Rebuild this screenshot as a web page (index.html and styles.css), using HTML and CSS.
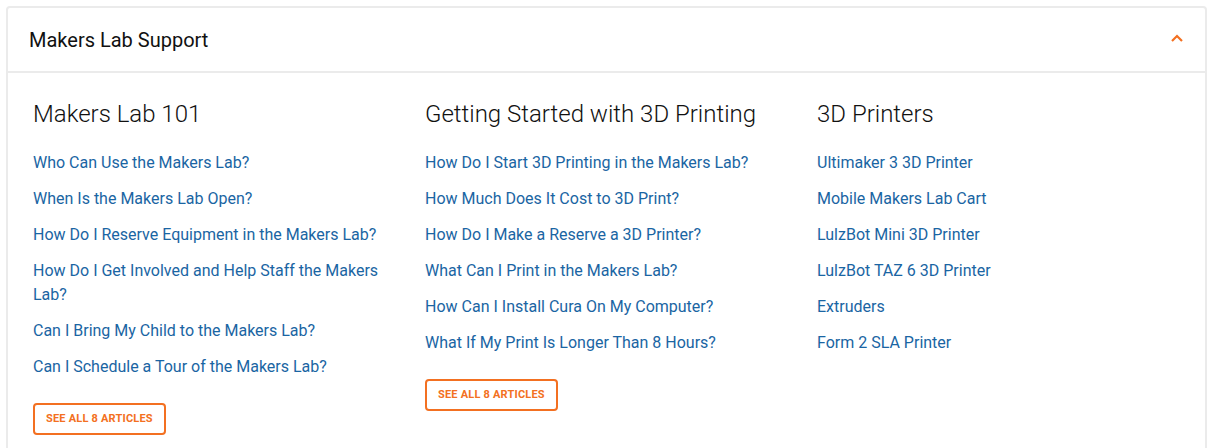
FILE: index.html
```html
<!DOCTYPE html>
<html lang="en">
<head>
<meta charset="utf-8">
<title>Makers Lab Support</title>
<link rel="stylesheet" href="styles.css">
</head>
<body>
<section class="card">
  <header class="card-header">
    <h2 class="card-title">Makers Lab Support</h2>
    <svg class="chevron" width="12" height="8" viewBox="0 0 12 8" aria-hidden="true">
      <polyline points="1,7 6,2 11,7" fill="none" stroke="#f37021" stroke-width="2.2"/>
    </svg>
  </header>
  <div class="card-body">
    <div class="col">
      <h3 class="col-title">Makers Lab 101</h3>
      <ul class="links">
        <li><a href="#">Who Can Use the Makers Lab?</a></li>
        <li><a href="#">When Is the Makers Lab Open?</a></li>
        <li><a href="#">How Do I Reserve Equipment in the Makers Lab?</a></li>
        <li><a href="#">How Do I Get Involved and Help Staff the Makers Lab?</a></li>
        <li><a href="#">Can I Bring My Child to the Makers Lab?</a></li>
        <li><a href="#">Can I Schedule a Tour of the Makers Lab?</a></li>
      </ul>
      <a class="btn" href="#">See all 8 articles</a>
    </div>
    <div class="col">
      <h3 class="col-title">Getting Started with 3D Printing</h3>
      <ul class="links">
        <li><a href="#">How Do I Start 3D Printing in the Makers Lab?</a></li>
        <li><a href="#">How Much Does It Cost to 3D Print?</a></li>
        <li><a href="#">How Do I Make a Reserve a 3D Printer?</a></li>
        <li><a href="#">What Can I Print in the Makers Lab?</a></li>
        <li><a href="#">How Can I Install Cura On My Computer?</a></li>
        <li><a href="#">What If My Print Is Longer Than 8 Hours?</a></li>
      </ul>
      <a class="btn" href="#">See all 8 articles</a>
    </div>
    <div class="col">
      <h3 class="col-title">3D Printers</h3>
      <ul class="links">
        <li><a href="#">Ultimaker 3 3D Printer</a></li>
        <li><a href="#">Mobile Makers Lab Cart</a></li>
        <li><a href="#">LulzBot Mini 3D Printer</a></li>
        <li><a href="#">LulzBot TAZ 6 3D Printer</a></li>
        <li><a href="#">Extruders</a></li>
        <li><a href="#">Form 2 SLA Printer</a></li>
      </ul>
    </div>
  </div>
</section>
</body>
</html>
```

FILE: styles.css
```css
* { box-sizing: border-box; }

html, body {
  margin: 0;
  padding: 0;
  background: #ffffff;
}

body {
  font-family: Roboto, "Liberation Sans", Arial, sans-serif;
  color: #111;
}

.card {
  margin: 6px 0 0 6px;
  width: 1201px;
  border: 2px solid #ebebeb;
  border-radius: 4px;
  background: #fff;
}

.card-header {
  height: 65px;
  border-bottom: 2px solid #ebebeb;
  display: flex;
  align-items: center;
  justify-content: space-between;
  padding: 0 22px 0 21px;
}

.card-title {
  margin: 0;
  font-size: 20px;
  font-weight: 400;
  color: #111;
  line-height: 24px;
  padding-top: 1px;
}

.chevron {
  display: block;
  margin-top: -4px;
}

.card-body {
  display: grid;
  grid-template-columns: 362px 362px 362px;
  column-gap: 30px;
  padding: 26px 25px 40px 25px;
}

.col {
  display: flex;
  flex-direction: column;
  align-items: flex-start;
}

.col-title {
  margin: 0 0 22px 0;
  font-size: 24px;
  font-weight: 300;
  line-height: 30px;
  color: #111;
}

.links {
  list-style: none;
  margin: 0;
  padding: 0;
}

.links li {
  margin: 0 0 12px 0;
  font-size: 16px;
  line-height: 24px;
}

.links a {
  color: #1a65a3;
  text-decoration: none;
}

.btn {
  margin-top: 12px;
  display: inline-block;
  height: 32px;
  line-height: 28px;
  padding: 0 11px;
  border: 2px solid #f37021;
  border-radius: 4px;
  color: #f37021;
  font-size: 11px;
  font-weight: 700;
  text-transform: uppercase;
  letter-spacing: 0.2px;
  text-decoration: none;
}
```
